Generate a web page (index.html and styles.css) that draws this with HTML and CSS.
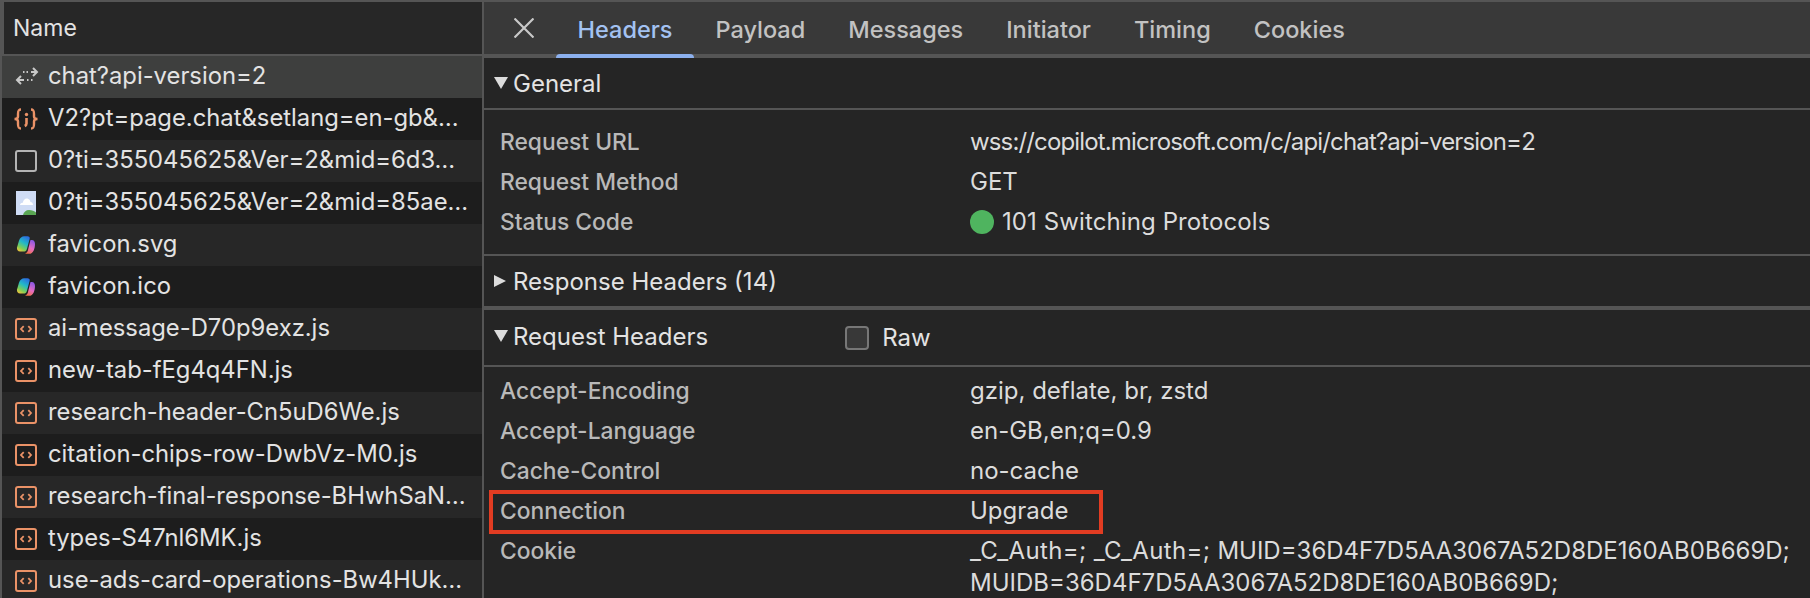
FILE: index.html
```html
<!DOCTYPE html>
<html lang="en">
<head>
<meta charset="utf-8">
<title>Network headers</title>
<link rel="stylesheet" href="styles.css">
</head>
<body>
<svg class="defs" width="0" height="0" aria-hidden="true">
  <defs>
    <linearGradient id="cpLeft" x1="0.7" y1="0" x2="0.2" y2="1"><stop offset="0" stop-color="#2b6fe0"/><stop offset=".4" stop-color="#22b8c8"/><stop offset=".75" stop-color="#7ccf58"/><stop offset="1" stop-color="#f2c53a"/></linearGradient>
    <linearGradient id="cpRight" x1="0.7" y1="0" x2="0.3" y2="1"><stop offset="0" stop-color="#8a58e6"/><stop offset=".55" stop-color="#e66cc0"/><stop offset="1" stop-color="#f2703a"/></linearGradient>
    <symbol id="i-script" viewBox="0 0 24 24">
      <rect x="1" y="2" width="20" height="20" rx="2" fill="none" stroke="#ea9267" stroke-width="2"/>
      <path d="M8.700 9.200 6 12l2.700 2.800M13.300 9.200 16 12l-2.700 2.800" fill="none" stroke="#ea9267" stroke-width="1.800"/>
    </symbol>
    <symbol id="i-copilot" viewBox="0 0 24 24">
      <g transform="translate(.2 1.500) scale(.9)">
        <path d="M10 2h3.500c2 0 3 1 2.500 3L13 16c-.6 2-1.800 3-3.600 3H5.500C3 19 1.500 17 2 14.500L4.200 7C5.200 3.800 7.500 2 10 2Z" fill="url(#cpLeft)"/>
        <path d="M17 6h1.500c2.500 0 3.500 2 3.500 4.500 0 5-2 11-6.500 11H9.500c2 0 3.800-1.200 4.500-3.500L17 6Z" fill="url(#cpRight)"/>
      </g>
    </symbol>
  </defs>
</svg>

<main class="app">
  <section class="list">
    <header class="list-head">Name</header>
    <ul class="rows">
      <li class="row selected">
        <svg class="ico" viewBox="0 0 24 24"><path d="M18 3 22 7l-4 4M22 7h-6M13 7h-1.500M9.500 7H8M6 11 2 15l4 4M2 15h7M12 15h1.500M16 15h1.500" fill="none" stroke="#c9c9c9" stroke-width="2"/></svg>
        <span class="name">chat?api-version=2</span>
      </li>
      <li class="row">
        <svg class="ico wide" viewBox="0 0 26 24"><path d="M8 2.500C5 2.500 5 4.500 5 7v2.500C5 11 3.500 12 1.500 12 3.500 12 5 13 5 14.500V17c0 2.500 0 4.500 3 4.500M18 2.500c3 0 3 2 3 4.500v2.500c0 1.500 1.500 2.500 3.500 2.500-2 0-3.500 1-3.500 2.500V17c0 2.500 0 4.500-3 4.500" fill="none" stroke="#ea9267" stroke-width="2.400"/><circle cx="13.500" cy="7.500" r="1.700" fill="#ea9267"/><path d="M13.500 11v5.500c0 1.200-.7 2-1.800 2.500" fill="none" stroke="#ea9267" stroke-width="2.600"/></svg>
        <span class="name">V2?pt=page.chat&amp;setlang=en-gb&amp;…</span>
      </li>
      <li class="row">
        <svg class="ico" viewBox="0 0 24 24"><rect x="1" y="2" width="20" height="20" rx="2" fill="none" stroke="#b4b4b4" stroke-width="2"/></svg>
        <span class="name">0?ti=355045625&amp;Ver=2&amp;mid=6d3…</span>
      </li>
      <li class="row">
        <svg class="ico" viewBox="0 0 24 24"><rect x="1" y="0" width="20" height="24" fill="#cfdcf5"/><path d="M5 14c0-1.500 1.300-2.500 2.800-2.300.5-3 3-5 5.500-3.700 1.500.7 2 1.800 2.100 3 1.500 0 2.600 1.200 2.600 3Z" fill="#fff"/><path d="M8 24c.6-3 3-5 6-5 3 0 5.500 1 7 2.500V24Z" fill="#5aa653"/></svg>
        <span class="name">0?ti=355045625&amp;Ver=2&amp;mid=85ae…</span>
      </li>
      <li class="row">
        <svg class="ico"><use href="#i-copilot"/></svg>
        <span class="name">favicon.svg</span>
      </li>
      <li class="row">
        <svg class="ico"><use href="#i-copilot"/></svg>
        <span class="name">favicon.ico</span>
      </li>
      <li class="row"><svg class="ico"><use href="#i-script"/></svg><span class="name">ai-message-D70p9exz.js</span></li>
      <li class="row"><svg class="ico"><use href="#i-script"/></svg><span class="name">new-tab-fEg4q4FN.js</span></li>
      <li class="row"><svg class="ico"><use href="#i-script"/></svg><span class="name">research-header-Cn5uD6We.js</span></li>
      <li class="row"><svg class="ico"><use href="#i-script"/></svg><span class="name">citation-chips-row-DwbVz-M0.js</span></li>
      <li class="row"><svg class="ico"><use href="#i-script"/></svg><span class="name">research-final-response-BHwhSaN…</span></li>
      <li class="row"><svg class="ico"><use href="#i-script"/></svg><span class="name">types-S47nl6MK.js</span></li>
      <li class="row"><svg class="ico"><use href="#i-script"/></svg><span class="name">use-ads-card-operations-Bw4HUk…</span></li>
    </ul>
  </section>

  <section class="detail">
    <nav class="tabs">
      <svg class="close" viewBox="0 0 20 20"><path d="M.5.5l19 19M19.500.5l-19 19" fill="none" stroke="#c8c8c8" stroke-width="2.200"/></svg>
      <a class="tab active">Headers</a>
      <a class="tab">Payload</a>
      <a class="tab">Messages</a>
      <a class="tab">Initiator</a>
      <a class="tab">Timing</a>
      <a class="tab">Cookies</a>
    </nav>

    <h2 class="sec sec-general"><span class="tri down"></span>General</h2>
    <dl class="kv kv-general">
      <div class="kv-row"><dt>Request URL</dt><dd class="url">wss://copilot.microsoft.com/c/api/chat?api-version=2</dd></div>
      <div class="kv-row"><dt>Request Method</dt><dd>GET</dd></div>
      <div class="kv-row"><dt>Status Code</dt><dd class="status"><span class="dot"></span>101 Switching Protocols</dd></div>
    </dl>

    <h2 class="sec sec-response"><span class="tri right"></span>Response Headers (14)</h2>

    <div class="sec sec-request">
      <h2 class="sec-title"><span class="tri down"></span>Request Headers</h2>
      <label class="raw"><span class="check"></span>Raw</label>
    </div>
    <dl class="kv kv-request">
      <div class="kv-row"><dt>Accept-Encoding</dt><dd>gzip, deflate, br, zstd</dd></div>
      <div class="kv-row"><dt>Accept-Language</dt><dd>en-GB,en;q=0.9</dd></div>
      <div class="kv-row"><dt>Cache-Control</dt><dd>no-cache</dd></div>
      <div class="kv-row"><dt>Connection</dt><dd>Upgrade</dd></div>
      <div class="kv-row"><dt>Cookie</dt><dd class="cookie"><span class="auth">_C_Auth=; _C_Auth=; </span>MUID=36D4F7D5AA3067A52D8DE160AB0B669D;<br>MUIDB=36D4F7D5AA3067A52D8DE160AB0B669D;</dd></div>
    </dl>
    <div class="highlight"></div>
  </section>
</main>
</body>
</html>
```

FILE: styles.css
```css
* { box-sizing: border-box; }

html, body {
  margin: 0;
  height: 598px;
  overflow: hidden;
  background: #252525;
}

body {
  font-family: Inter, "Noto Sans", sans-serif;
  font-size: 24px;
  color: #e3e3e3;
}

.defs { position: absolute; }

.app {
  display: flex;
  height: 598px;
}

/* Request list */
.list {
  width: 482px;
  flex: none;
  background: #555;
  padding-top: 2px;
  overflow: hidden;
}

.list-head {
  height: 54px;
  margin-left: 4px;
  padding-left: 9px;
  background: #272727;
  border-bottom: 2px solid #555;
  display: flex;
  align-items: center;
  font-size: 23px;
  color: #e3e3e3;
}

.rows {
  list-style: none;
  margin: 0 0 0 2px;
  padding: 0;
}

.row {
  height: 42px;
  display: flex;
  align-items: center;
  padding-left: 13px;
  background: #272727;
  white-space: nowrap;
  overflow: hidden;
}

.row:nth-child(even) { background: #1d1d1d; }
.row.selected { background: #3e3f3e; }

.ico {
  width: 24px;
  height: 24px;
  flex: none;
  margin-right: 9px;
}

.ico.wide { width: 26px; margin-left: -2px; margin-right: 9px; }

.name {
  font-size: 23.800px;
  color: #e3e3e3;
  padding-bottom: 3px;
}

/* Detail pane */
.detail {
  flex: 1;
  position: relative;
  background: #252525;
  border-left: 2px solid #555;
  border-top: 2px solid #555;
  overflow: hidden;
}

.tabs {
  height: 56px;
  background: #393939;
  border-bottom: 4px solid #555;
  display: flex;
  align-items: flex-start;
  padding-left: 72px;
  position: relative;
}

.close {
  position: absolute;
  left: 30px;
  top: 16px;
  width: 20px;
  height: 20px;
}

.tab {
  height: 52px;
  padding: 2px 21.500px 0;
  display: flex;
  align-items: center;
  font-size: 23.500px;
  font-weight: 500;
  color: #c2c2c2;
  position: relative;
}

.tab.active { color: #a3c2f2; }

.tab.active::after {
  content: "";
  position: absolute;
  left: 0;
  right: 0;
  bottom: -4px;
  height: 4px;
  background: #8cb0ee;
  border-radius: 4px 4px 0 0;
}

.sec {
  margin: 0;
  display: flex;
  align-items: center;
  padding-left: 10px;
  font-size: 24px;
  font-weight: 400;
  color: #e3e3e3;
}

.sec-title {
  margin: 0;
  font: inherit;
  display: flex;
  align-items: center;
  padding-bottom: 3px;
}

.sec-general {
  height: 52px;
  border-bottom: 2px solid #555;
}

.sec-response {
  height: 56px;
  border-top: 2px solid #555;
  border-bottom: 4px solid #555;
}

.sec-request {
  height: 57px;
  border-bottom: 2px solid #555;
}

.tri {
  width: 0;
  height: 0;
  margin-right: 5px;
  border-style: solid;
  border-color: transparent;
}

.tri.down {
  border-width: 12px 7px 0;
  border-top-color: #dcdcdc;
}

.tri.right {
  border-width: 6.500px 0 6.500px 12px;
  border-left-color: #dcdcdc;
  margin-right: 7px;
}

.raw {
  display: flex;
  align-items: center;
  margin-left: 137px;
}

.check {
  width: 24px;
  height: 24px;
  margin-right: 13px;
  background: #383838;
  border: 2px solid #777;
  border-radius: 4px;
}

.kv { margin: 0; }

.kv-general { padding: 12px 0 12px; }
.kv-request { padding: 4px 0 0; }

.kv-row {
  display: flex;
  align-items: flex-start;
  padding-left: 16px;
}

.kv-row dt {
  width: 470px;
  flex: none;
  height: 40px;
  line-height: 40px;
  font-weight: 500;
  font-size: 22.800px;
  color: #b9b9b9;
}

.kv-row dd {
  margin: 0;
  line-height: 40px;
  font-size: 24px;
  color: #dcdcdc;
  white-space: nowrap;
}

.kv-row dd.url { letter-spacing: -0.850px; }

.kv-row dd.cookie { line-height: 32px; padding-top: 4px; }

.auth { letter-spacing: 0.350px; }

.status {
  display: flex;
  align-items: center;
  letter-spacing: 0.100px;
}

.dot {
  width: 24px;
  height: 24px;
  margin-right: 8px;
  border-radius: 50%;
  background: #4fb45f;
}

.highlight {
  position: absolute;
  left: 5px;
  top: 488px;
  width: 614px;
  height: 44px;
  border: 4px solid #e23c22;
  pointer-events: none;
}
```
